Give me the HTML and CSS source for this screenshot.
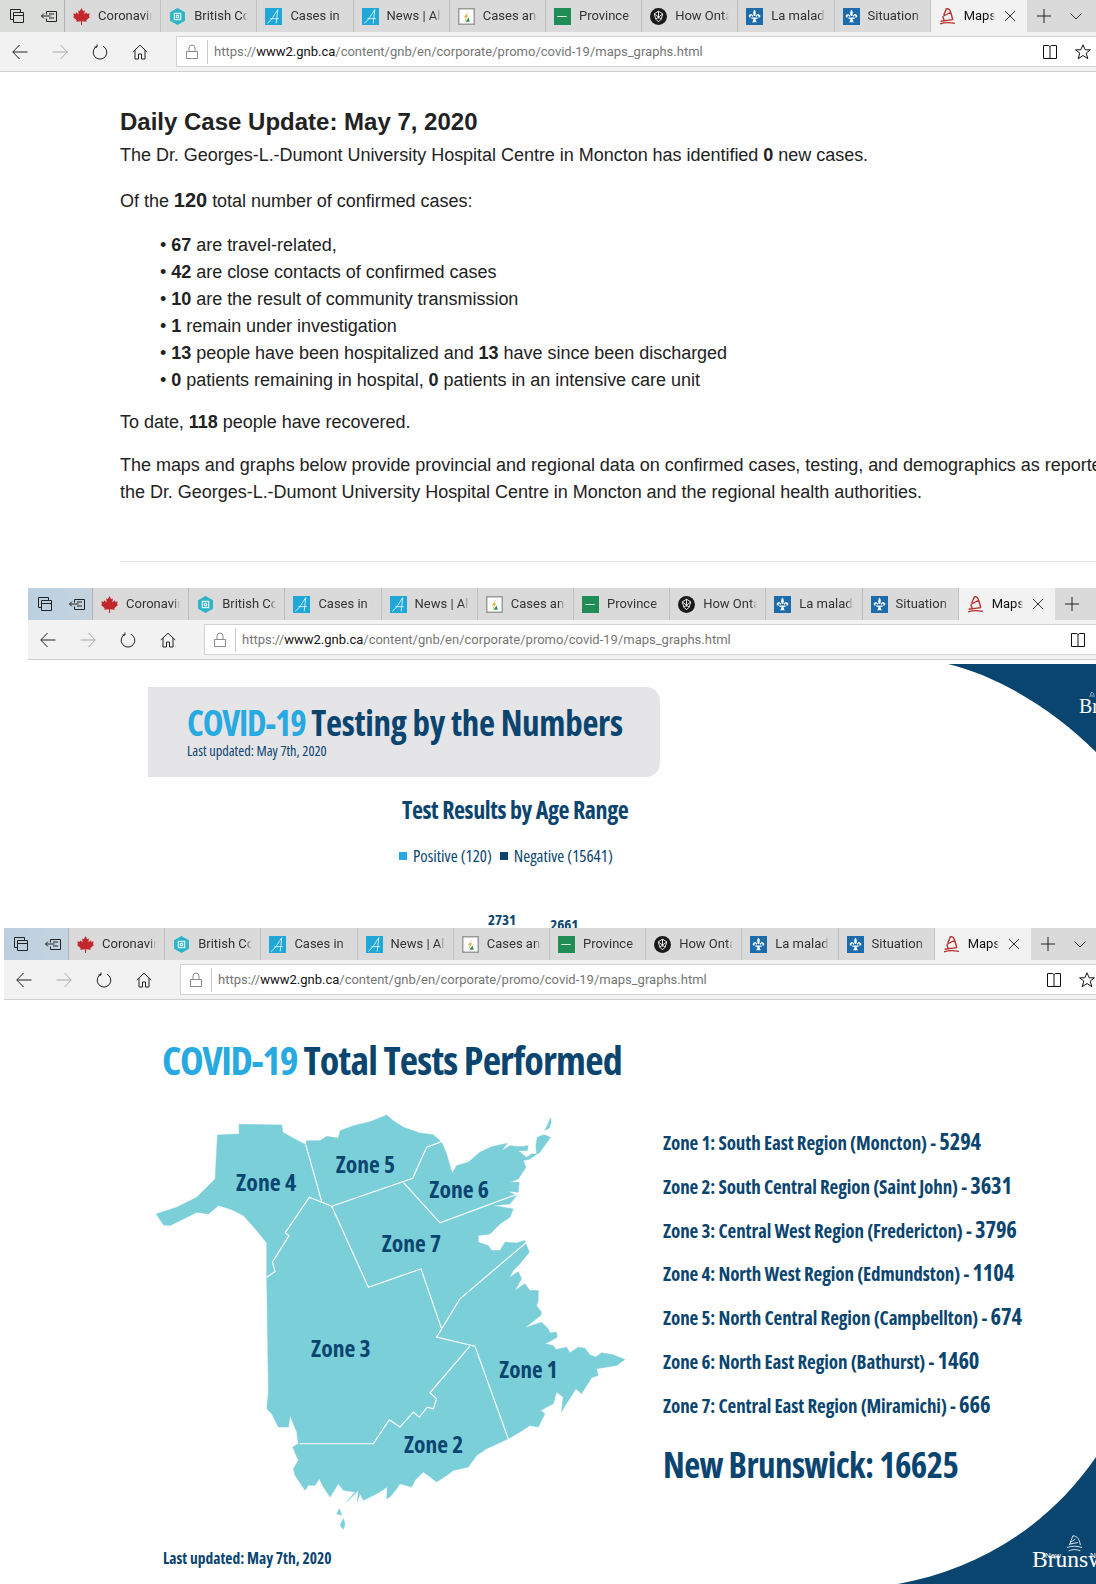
FILE: index.html
```html
<!DOCTYPE html>
<html lang="en">
<head>
    <meta charset="UTF-8">
    <title>COVID-19 maps and graphs</title>
    <link rel="stylesheet" href="styles.css">
</head>
<body>
    <svg class="defs" width="0" height="0">
        <symbol id="i-tabs" viewBox="0 0 16 16"><path d="M1.5 1.500h10v3M1.500 1.500v10h3M4.500 4.500h10v10h-10zM4.500 7.500h10" fill="none" stroke="#222"/></symbol>
        <symbol id="i-aside" viewBox="0 0 16 16"><path d="M5.500 3.500h10v10h-10v-3M5.500 6.500v-3M.5 8h9M3 5.500L.5 8 3 10.500M8 6h5M8 10h5" fill="none" stroke="#222"/></symbol>
        <symbol id="i-back" viewBox="0 0 16 16"><path d="M15.500 8H.8M7.500 1L.8 8l6.700 7" fill="none" stroke="currentColor"/></symbol>
        <symbol id="i-fwd" viewBox="0 0 16 16"><path d="M.5 8h14.700M8.500 1l6.700 7-6.700 7" fill="none" stroke="currentColor"/></symbol>
        <symbol id="i-reload" viewBox="0 0 16 16"><path d="M5 2.200A6.800 6.800 0 1 0 11 2.200M5 .5v2.600L2.400 3" fill="none" stroke="#222"/></symbol>
        <symbol id="i-home" viewBox="0 0 16 16"><path d="M.8 8L8 1.200 15.200 8M3 6v9h3.500v-5h3v5H13V6" fill="none" stroke="#222"/></symbol>
        <symbol id="i-lock" viewBox="0 0 16 16"><path d="M5 7V4a3 3 0 0 1 6 0v3M2.500 7.500h11v7h-11z" fill="none" stroke="#8a8a8a"/></symbol>
        <symbol id="i-book" viewBox="0 0 16 16"><path d="M1.500 1.500H6C7 1.500 8 2 8 3v11.500M14.500 1.500H10C9 1.500 8 2 8 3M1.500 1.500v13h13v-13" fill="none" stroke="#111"/></symbol>
        <symbol id="i-star" viewBox="0 0 16 16"><path d="M8 .8l2.200 5h5.200l-4.200 3.300 1.600 5.600L8 11.500l-4.800 3.200 1.600-5.600L.6 5.800h5.200z" fill="none" stroke="#111"/></symbol>
        <symbol id="i-x" viewBox="0 0 12 12"><path d="M1 1l10 10M11 1L1 11" fill="none" stroke="#333"/></symbol>
        <symbol id="i-plus" viewBox="0 0 14 14"><path d="M7 0v14M0 7h14" fill="none" stroke="#222"/></symbol>
        <symbol id="i-chev" viewBox="0 0 12 7"><path d="M.5.5L6 6l5.500-5.500" fill="none" stroke="#333"/></symbol>
        <symbol id="f-leaf" viewBox="0 0 16 16"><path d="M8 0l1.600 3 1.600-.8-.5 3.800 2-2 .6 1.500 2.500-.4-.8 2.700 1 .7L12.500 11.500l.5 1.500-4.500-.5V16h-1v-3.500L3 13l.5-1.500L0 8.500l1-.7L.2 5.100l2.500.4.600-1.500 2 2-.5-3.800 1.600.8z" fill="#c1272d"/></symbol>
        <symbol id="f-bc" viewBox="0 0 16 16"><path d="M8 0l7 4v8l-7 4-7-4V4z" fill="#2db4c8"/><path d="M5 5h6v6H5zM7 7h2v2H7z" fill="none" stroke="#d8f3f7" stroke-width="1.200"/></symbol>
        <symbol id="f-ab" viewBox="0 0 16 16"><path d="M0 0h16v16H0z" fill="#1ea7d7"/><path d="M2 14.500C6 12 9 6 12 1.500L10.500 14.500M5 10h8" fill="none" stroke="#e8f7fc" stroke-width=".8"/></symbol>
        <symbol id="f-cases" viewBox="0 0 16 16"><path d="M.7.700h14.600v14.600H.7z" fill="#fff" stroke="#9a9a9a" stroke-width="1.400"/><path d="M10 2L7.500 7l2-.5-3.500 7 1.500-5-2 .5z" fill="#e0a93a"/><path d="M7 13l3-4 1 4z" fill="#2f8f3f"/></symbol>
        <symbol id="f-prov" viewBox="0 0 16 16"><path d="M0 0h16v16H0z" fill="#1f8d55"/><path d="M3 8h9" stroke="#d7efe1"/></symbol>
        <symbol id="f-ont" viewBox="0 0 16 16"><circle cx="8" cy="8" r="8" fill="#1a1a1a"/><path d="M8 3l4 2.500-1.500 5L8 13l-2.500-2.500L4 5.500zM4 5.500l6.500 5M12 5.500l-6.500 5M8 3v7" fill="none" stroke="#eee" stroke-width=".9"/></symbol>
        <symbol id="f-qc" viewBox="0 0 16 16"><path d="M0 0h16v16H0z" fill="#1c6bab"/><path d="M8 1.500C9.500 3.500 9.500 5 8.700 7.500h-1.400C6.500 5 6.500 3.500 8 1.500zM6.700 7.500C6.500 5.500 3 5 2.500 7.500c0 1.500 1.700 2 2.200 1C3.800 8 4.200 6.800 5 7c.7.200.9 1 1 1.800zM9.300 7.500c.2-2 3.700-2.500 4.200 0 0 1.500-1.700 2-2.200 1 .9-.5.500-1.700-.3-1.500-.7.200-.9 1-1 1.800zM5 9h6v1H9c0 1.500.5 2.500 1.500 3.500h-5C6.500 12.500 7 11.500 7 10H5z" fill="#fff"/></symbol>
        <symbol id="f-maps" viewBox="0 0 16 16"><path d="M7 .5c2.500 0 3.500 1.500 4 3.500l2 7M7 .5L4.500 6.500M11 4L3.500 8M13 11L1.500 12.500M1 15c4-1.500 9-1.500 14-.5M3.500 8l1.500 4" fill="none" stroke="#b8322f" stroke-width="1.300"/></symbol>
    </svg>

    <section class="shot shot-one">
        <div class="chrome chrome-plain">
            <div class="tabbar">
                <div class="tab-ctl"><svg class="ico"><use href="#i-tabs"/></svg><svg class="ico"><use href="#i-aside"/></svg></div>
                <div class="tab"><svg class="fav"><use href="#f-leaf"/></svg><span>Coronavirus</span></div>
                <div class="tab"><svg class="fav"><use href="#f-bc"/></svg><span>British Columbia</span></div>
                <div class="tab"><svg class="fav"><use href="#f-ab"/></svg><span>Cases in Alberta</span></div>
                <div class="tab"><svg class="fav"><use href="#f-ab"/></svg><span>News | Alberta</span></div>
                <div class="tab"><svg class="fav"><use href="#f-cases"/></svg><span>Cases and</span></div>
                <div class="tab"><svg class="fav"><use href="#f-prov"/></svg><span>Province of</span></div>
                <div class="tab"><svg class="fav"><use href="#f-ont"/></svg><span>How Ontario</span></div>
                <div class="tab"><svg class="fav"><use href="#f-qc"/></svg><span>La maladie</span></div>
                <div class="tab"><svg class="fav"><use href="#f-qc"/></svg><span>Situation</span></div>
                <div class="tab tab-active"><svg class="fav"><use href="#f-maps"/></svg><span>Maps</span><svg class="tab-x"><use href="#i-x"/></svg></div>
                <div class="tab-new"><svg class="plus"><use href="#i-plus"/></svg><svg class="chev"><use href="#i-chev"/></svg></div>
            </div>
            <div class="toolbar">
                <svg class="ico nav"><use href="#i-back"/></svg><svg class="ico nav dim"><use href="#i-fwd"/></svg><svg class="ico nav"><use href="#i-reload"/></svg><svg class="ico nav"><use href="#i-home"/></svg>
                <div class="addr"><svg class="ico lock"><use href="#i-lock"/></svg><span class="url">https://<em>www2.gnb.ca</em>/content/gnb/en/corporate/promo/covid-19/maps_graphs.html</span><svg class="ico book"><use href="#i-book"/></svg><svg class="ico star"><use href="#i-star"/></svg></div>
            </div>
        </div>
        <div class="update">
            <h2>Daily Case Update: May 7, 2020</h2>
            <p class="lead">The Dr. Georges-L.-Dumont University Hospital Centre in Moncton has identified <b>0</b> new cases.</p>
            <p class="intro">Of the <b class="big">120</b> total number of confirmed cases:</p>
            <ul>
                <li>&bull; <b>67</b> are travel-related,</li>
                <li>&bull; <b>42</b> are close contacts of confirmed cases</li>
                <li>&bull; <b>10</b> are the result of community transmission</li>
                <li>&bull; <b>1</b> remain under investigation</li>
                <li>&bull; <b>13</b> people have been hospitalized and <b>13</b> have since been discharged</li>
                <li>&bull; <b>0</b> patients remaining in hospital, <b>0</b> patients in an intensive care unit</li>
            </ul>
            <p>To date, <b>118</b> people have recovered.</p>
            <p>The maps and graphs below provide provincial and regional data on confirmed cases, testing, and demographics as reported by<br>the Dr. Georges-L.-Dumont University Hospital Centre in Moncton and the regional health authorities.</p>
            <hr>
        </div>
    </section>

    <section class="shot shot-two">
        <div class="chrome">
            <div class="tabbar">
                <div class="tab-ctl"><svg class="ico"><use href="#i-tabs"/></svg><svg class="ico"><use href="#i-aside"/></svg></div>
                <div class="tab"><svg class="fav"><use href="#f-leaf"/></svg><span>Coronavirus</span></div>
                <div class="tab"><svg class="fav"><use href="#f-bc"/></svg><span>British Columbia</span></div>
                <div class="tab"><svg class="fav"><use href="#f-ab"/></svg><span>Cases in Alberta</span></div>
                <div class="tab"><svg class="fav"><use href="#f-ab"/></svg><span>News | Alberta</span></div>
                <div class="tab"><svg class="fav"><use href="#f-cases"/></svg><span>Cases and</span></div>
                <div class="tab"><svg class="fav"><use href="#f-prov"/></svg><span>Province of</span></div>
                <div class="tab"><svg class="fav"><use href="#f-ont"/></svg><span>How Ontario</span></div>
                <div class="tab"><svg class="fav"><use href="#f-qc"/></svg><span>La maladie</span></div>
                <div class="tab"><svg class="fav"><use href="#f-qc"/></svg><span>Situation</span></div>
                <div class="tab tab-active"><svg class="fav"><use href="#f-maps"/></svg><span>Maps</span><svg class="tab-x"><use href="#i-x"/></svg></div>
                <div class="tab-new"><svg class="plus"><use href="#i-plus"/></svg><svg class="chev"><use href="#i-chev"/></svg></div>
            </div>
            <div class="toolbar">
                <svg class="ico nav"><use href="#i-back"/></svg><svg class="ico nav dim"><use href="#i-fwd"/></svg><svg class="ico nav"><use href="#i-reload"/></svg><svg class="ico nav"><use href="#i-home"/></svg>
                <div class="addr"><svg class="ico lock"><use href="#i-lock"/></svg><span class="url">https://<em>www2.gnb.ca</em>/content/gnb/en/corporate/promo/covid-19/maps_graphs.html</span><svg class="ico book"><use href="#i-book"/></svg><svg class="ico star"><use href="#i-star"/></svg></div>
            </div>
        </div>
        <div class="testing">
            <div class="banner">
                <h2 class="fig-title"><span class="light">COVID-19</span> Testing by the Numbers</h2>
                <p class="fig-date">Last updated: May 7th, 2020</p>
            </div>
            <h3 class="age-title">Test Results by Age Range</h3>
            <div class="legend">
                <i class="sq sq-light"></i><span>Positive (120)</span>
                <i class="sq sq-dark"></i><span>Negative (15641)</span>
            </div>
            <div class="age-values"><span>2731</span><span class="lower">2661</span></div>
        </div>
        <div class="corner corner-top">
            <svg width="148" height="88"><path d="M0 0C50 12 105 45 148 88V0Z" fill="#0a4570"/></svg>
            <svg class="crest" viewBox="0 0 20 24" width="6" height="7"><path d="M8 1c5 0 8 4 9 11M8 1L4 12M1 15c5-2 12-2 18 0" fill="none" stroke="#fff" stroke-width="2"/></svg>
            <span class="corner-name">Brunswick</span>
        </div>
    </section>

    <section class="shot shot-three">
        <div class="chrome">
            <div class="tabbar">
                <div class="tab-ctl"><svg class="ico"><use href="#i-tabs"/></svg><svg class="ico"><use href="#i-aside"/></svg></div>
                <div class="tab"><svg class="fav"><use href="#f-leaf"/></svg><span>Coronavirus</span></div>
                <div class="tab"><svg class="fav"><use href="#f-bc"/></svg><span>British Columbia</span></div>
                <div class="tab"><svg class="fav"><use href="#f-ab"/></svg><span>Cases in Alberta</span></div>
                <div class="tab"><svg class="fav"><use href="#f-ab"/></svg><span>News | Alberta</span></div>
                <div class="tab"><svg class="fav"><use href="#f-cases"/></svg><span>Cases and</span></div>
                <div class="tab"><svg class="fav"><use href="#f-prov"/></svg><span>Province of</span></div>
                <div class="tab"><svg class="fav"><use href="#f-ont"/></svg><span>How Ontario</span></div>
                <div class="tab"><svg class="fav"><use href="#f-qc"/></svg><span>La maladie</span></div>
                <div class="tab"><svg class="fav"><use href="#f-qc"/></svg><span>Situation</span></div>
                <div class="tab tab-active"><svg class="fav"><use href="#f-maps"/></svg><span>Maps</span><svg class="tab-x"><use href="#i-x"/></svg></div>
                <div class="tab-new"><svg class="plus"><use href="#i-plus"/></svg><svg class="chev"><use href="#i-chev"/></svg></div>
            </div>
            <div class="toolbar">
                <svg class="ico nav"><use href="#i-back"/></svg><svg class="ico nav dim"><use href="#i-fwd"/></svg><svg class="ico nav"><use href="#i-reload"/></svg><svg class="ico nav"><use href="#i-home"/></svg>
                <div class="addr"><svg class="ico lock"><use href="#i-lock"/></svg><span class="url">https://<em>www2.gnb.ca</em>/content/gnb/en/corporate/promo/covid-19/maps_graphs.html</span><svg class="ico book"><use href="#i-book"/></svg><svg class="ico star"><use href="#i-star"/></svg></div>
            </div>
        </div>
        <div class="tests">
            <h2 class="tests-title"><span class="light">COVID-19</span> Total Tests Performed</h2>
            <div class="tests-row">
                <div class="map-col">
                    <svg class="map" viewBox="0 0 1500 1300" width="500" height="433">
                        <path class="land" d="M232 108L297 105 297 76 425 78 428 100 460 118 497 137 500 125 540 125 560 112 595 118 600 95 640 80 690 68 740 48 760 65 790 85 840 102 880 107 905 130 920 165 930 200 937 223 950 200 985 190 1020 160 1055 143 1102 133 1085 155 1110 140 1140 143 1165 140 1162 155 1135 155 1160 175 1175 165 1190 165 1188 140 1192 115 1212 107 1232 115 1200 160 1185 170 1170 180 1150 185 1158 205 1135 240 1110 250 1138 250 1135 280 1102 277 1130 290 1110 315 1060 320 1120 330 1110 355 1080 375 1050 405 1015 410 1015 430 1045 440 1055 455 1080 455 1095 430 1130 432 1155 425 1168 460 1140 495 1120 515 1108 537 1135 518 1145 540 1125 575 1155 555 1170 575 1195 575 1195 605 1190 620 1205 640 1202 650 1155 687 1205 670 1225 690 1230 702 1250 700 1252 715 1235 725 1215 735 1240 740 1248 752 1280 745 1290 762 1315 745 1335 748 1350 768 1368 775 1385 762 1420 768 1455 782 1430 800 1370 810 1375 830 1355 837 1325 885 1308 870 1265 938 1270 895 1250 880 1240 915 1202 935 1215 945 1195 985 1170 980 1140 1000 1105 1020 1040 1050 1010 1070 985 1105 940 1115 920 1130 890 1150 865 1130 850 1120 825 1145 815 1165 780 1155 770 1170 750 1195 740 1200 742 1165 710 1185 670 1205 660 1185 652 1210 655 1175 620 1210 645 1180 610 1175 595 1155 570 1195 550 1165 538 1140 525 1160 505 1160 495 1175 465 1130 460 1110 475 1085 458 1045 475 1035 470 1000 450 950 445 985 415 985 395 945 380 930 385 880 380 540 380 432 350 395 310 350 270 330 235 320 205 345 170 340 90 380 70 378 48 345 110 325 170 295 225 240Z"/>
                        <path class="land" d="M1232 57L1215 95 1228 87 1234 70ZM598 1230L590 1245 605 1250ZM610 1260L600 1280 610 1292 615 1275Z"/>
                        <path class="border" d="M497 137L545 308M380 535L405 518 397 490 447 410 435 402 508 295 575 322M575 322L818 238 860 145 905 128M790 250L900 372 1135 285M575 322L685 565 843 510 905 690M1160 430L960 600 905 690 890 715 1005 742 1105 1020M990 742L870 882 890 900 880 930 862 925 838 955 820 940 780 985 748 963 700 1035 478 1035"/>
                        <text class="zone" x="288" y="275" textLength="180" lengthAdjust="spacingAndGlyphs">Zone 4</text>
                        <text class="zone" x="587" y="222" textLength="178" lengthAdjust="spacingAndGlyphs">Zone 5</text>
                        <text class="zone" x="868" y="296" textLength="179" lengthAdjust="spacingAndGlyphs">Zone 6</text>
                        <text class="zone" x="725" y="458" textLength="178" lengthAdjust="spacingAndGlyphs">Zone 7</text>
                        <text class="zone" x="513" y="775" textLength="179" lengthAdjust="spacingAndGlyphs">Zone 3</text>
                        <text class="zone" x="1078" y="838" textLength="175" lengthAdjust="spacingAndGlyphs">Zone 1</text>
                        <text class="zone" x="792" y="1063" textLength="178" lengthAdjust="spacingAndGlyphs">Zone 2</text>
                    </svg>
                    <p class="tests-date">Last updated: May 7th, 2020</p>
                </div>
                <div class="zones">
                    <p>Zone 1: South East Region (Moncton) - <b>5294</b></p>
                    <p>Zone 2: South Central Region (Saint John) - <b>3631</b></p>
                    <p>Zone 3: Central West Region (Fredericton) - <b>3796</b></p>
                    <p>Zone 4: North West Region (Edmundston) - <b>1104</b></p>
                    <p>Zone 5: North Central Region (Campbellton) - <b>674</b></p>
                    <p>Zone 6: North East Region (Bathurst) - <b>1460</b></p>
                    <p>Zone 7: Central East Region (Miramichi) - <b>666</b></p>
                    <p class="zones-total">New Brunswick: 16625</p>
                </div>
            </div>
        </div>
        <div class="corner corner-bottom">
            <svg width="198" height="127"><path d="M0 127C80 112 150 70 198 0V127Z" fill="#0a4570"/></svg>
            <svg class="crest" viewBox="0 0 20 24" width="17" height="20"><path d="M8 1c5 0 8 4 9 11M8 1L4 12M11 5L5 9M14 9L4 11M1 15c5-2 12-2 18 0M3 19c4-2 10-2 14 0" fill="none" stroke="#fff"/></svg>
            <span class="corner-small">New</span><span class="corner-small no">Nouveau</span>
            <span class="corner-name">Brunswick</span>
        </div>
    </section>
</body>
</html>
```

FILE: styles.css
```css
html, body{
    margin: 0;
    height: 1584px;
    overflow: hidden;
    background-color: #fff;
}
body{
    font-family: "Liberation Sans", Arial, sans-serif;
    color: #222;
}
.defs{
    position: absolute;
}

/* browser window captures */
.shot{
    position: relative;
    overflow: hidden;
}
.shot-one{
    height: 588px;
}
.shot-two{
    height: 340px;
    margin-left: 28px;
}
.shot-three{
    height: 656px;
    margin-left: 4px;
}
.chrome{
    width: 1096px;
    font-family: Roboto, sans-serif;
    font-size: 13px;
}
.tabbar{
    display: flex;
    height: 32px;
    background-color: #dadada;
}
.tab-ctl{
    display: flex;
    align-items: center;
    gap: 16px;
    width: 65px;
    box-sizing: border-box;
    padding-left: 9px;
    border-right: 1px solid #aeb4b8;
    background: linear-gradient(90deg, #bcd0e1, #c5d3de);
}
.chrome-plain .tab-ctl{
    background: #dadcd7;
}
.ico{
    width: 16px;
    height: 16px;
    flex: none;
}
.tab{
    display: flex;
    align-items: center;
    width: 96.2px;
    flex: none;
    box-sizing: border-box;
    padding-left: 8px;
    border-right: 1px solid #c0c0c0;
    color: #333;
}
.fav{
    width: 17px;
    height: 17px;
    flex: none;
    margin-right: 8px;
}
.tab span{
    width: 54px;
    margin-top: -2px;
    overflow: hidden;
    white-space: nowrap;
    -webkit-mask-image: linear-gradient(90deg, #000 88%, transparent);
    mask-image: linear-gradient(90deg, #000 88%, transparent);
}
.tab-active{
    background-color: #f2f2f2;
    border-right: 0;
    color: #111;
}
.tab-active span{
    width: 31px;
}
.tab-x{
    width: 12px;
    height: 12px;
    margin-left: 9px;
}
.tab-new{
    display: flex;
    align-items: center;
    width: 68px;
    flex: none;
    padding-left: 10px;
    box-sizing: border-box;
}
.plus{
    width: 14px;
    height: 14px;
}
.chev{
    width: 12px;
    height: 7px;
    margin-left: 19px;
}
.toolbar{
    display: flex;
    align-items: center;
    height: 39px;
    padding-left: 12px;
    gap: 24px;
    background-color: #f2f2f2;
    border-bottom: 1px solid #cfcfcf;
    color: #222;
}
.nav.dim{
    color: #a8a8a8;
}
.addr{
    display: flex;
    align-items: center;
    flex: 1;
    height: 29px;
    margin: 0 0 0 4px;
    background-color: #fff;
    border: 1px solid #d2d2d2;
    border-right: 0;
}
.lock{
    margin-left: 7px;
}
.url{
    flex: 1;
    margin-left: 7px;
    padding-left: 6px;
    border-left: 1px solid #c8c8c8;
    color: #767676;
    line-height: 24px;
    white-space: nowrap;
}
.url em{
    font-style: normal;
    color: #111;
}
.book{
    margin-right: 17px;
}
.star{
    margin-right: 5px;
}

/* first capture, page text */
.update{
    padding: 35px 0 0 120px;
    font-size: 18px;
    line-height: 27px;
    letter-spacing: -.025px;
}
.update h2{
    margin: 0 0 5px;
    font-size: 24px;
    line-height: 30px;
    letter-spacing: 0;
}
.update p{
    margin: 0 0 16px;
    white-space: nowrap;
}
.update .lead{
    margin-bottom: 19px;
}
.update .intro{
    margin-bottom: 17px;
}
.update .big{
    font-size: 20px;
    line-height: 20px;
}
.update ul{
    list-style: none;
    margin: 0 0 15px;
    padding: 0 0 0 40px;
}
.update hr{
    margin: 55px 0 0;
    border: 0;
    border-top: 1px solid #e4e4e4;
}

/* infographic type */
.fig-title, .age-title, .tests-title, .zones p, .legend, .fig-date, .tests-date, .zone{
    font-family: "Open Sans", sans-serif;
    font-stretch: 75%;
    color: #0a4570;
}
.light{
    color: #27aae1;
}

/* second capture */
.testing{
    padding: 27px 0 0 120px;
}
.banner{
    width: 512px;
    height: 90px;
    box-sizing: border-box;
    padding: 15px 0 0 39px;
    background-color: #e5e4e6;
    border-radius: 0 14px 14px 0;
}
.fig-title{
    margin: 0;
    font-size: 35px;
    line-height: 42px;
    letter-spacing: -.3px;
    white-space: nowrap;
}
.fig-title .light{
    letter-spacing: -1.2px;
}
.fig-date{
    margin: -2px 0 0;
    font-size: 14.300px;
    line-height: 18px;
    white-space: nowrap;
}
.age-title{
    margin: 20px 0 0 254px;
    font-size: 24px;
    line-height: 26px;
    letter-spacing: -.4px;
    white-space: nowrap;
}
.legend{
    display: flex;
    align-items: center;
    margin: 21px 0 0 251px;
    font-size: 16.800px;
    line-height: 24px;
    font-weight: 500;
}
.sq{
    width: 8px;
    height: 8px;
    margin-right: 6px;
}
.sq-light{
    background-color: #27aae1;
}
.sq-dark{
    margin-left: 8px;
    background-color: #0a4570;
}
.age-values{
    display: flex;
    margin: 42px 0 0 340px;
    gap: 34px;
    font-family: "Open Sans", sans-serif;
    font-stretch: 75%;
    font-weight: 700;
    font-size: 15px;
    line-height: 18px;
    color: #0a4570;
}
.age-values .lower{
    margin-top: 5px;
}
.corner{
    position: absolute;
    right: 0;
    line-height: 0;
    color: #fff;
}
.shot-two .corner-top{
    top: 76px;
}
.corner-name{
    position: absolute;
    font-family: "Liberation Serif", serif;
    line-height: 1;
    white-space: nowrap;
}
.corner-top .corner-name{
    left: 131px;
    top: 32px;
    font-size: 20px;
}
.corner-top .crest{
    left: 141px;
    top: 28px;
}
.corner-bottom{
    bottom: 0;
}
.corner-bottom .corner-name{
    left: 134px;
    top: 91px;
    font-size: 23.500px;
}
.corner-small{
    position: absolute;
    left: 147px;
    top: 95px;
    font-family: "Liberation Sans", sans-serif;
    font-size: 8px;
    line-height: 1;
}
.corner-small.no{
    left: 192px;
}
.crest{
    position: absolute;
    left: 168px;
    top: 78px;
}

/* third capture */
.tests{
    padding: 36px 0 0 136px;
}
.tests-title{
    margin: 0 0 0 22px;
    font-size: 40px;
    line-height: 48px;
    letter-spacing: -.8px;
    white-space: nowrap;
}
.tests-title .light{
    letter-spacing: -1.4px;
}
.tests-row{
    display: flex;
    gap: 23px;
    margin-top: 15px;
}
.map-col{
    flex: none;
    width: 500px;
}
.map{
    display: block;
}
.land{
    fill: #7bcfd9;
    stroke: #7bcfd9;
    stroke-width: 1.500;
    stroke-linejoin: round;
}
.border{
    fill: none;
    stroke: #fff;
    stroke-width: 3.500;
}
.zone{
    font-size: 72px;
    font-weight: 700;
    fill: #0a4570;
}
.tests-date{
    margin: 16px 0 0 23px;
    font-size: 15.500px;
    line-height: 20px;
    font-weight: 700;
}
.zones{
    padding-top: 30px;
}
.zones p{
    margin: 0 0 15.800px;
    font-size: 19px;
    line-height: 28px;
    font-weight: 700;
    letter-spacing: -.1px;
    white-space: nowrap;
}
.zones b{
    font-size: 22.500px;
    line-height: 20px;
    font-weight: 700;
}
.zones .zones-total{
    margin-top: 23px;
    font-size: 35px;
    line-height: 44px;
    font-weight: 700;
    letter-spacing: -.6px;
}
```
